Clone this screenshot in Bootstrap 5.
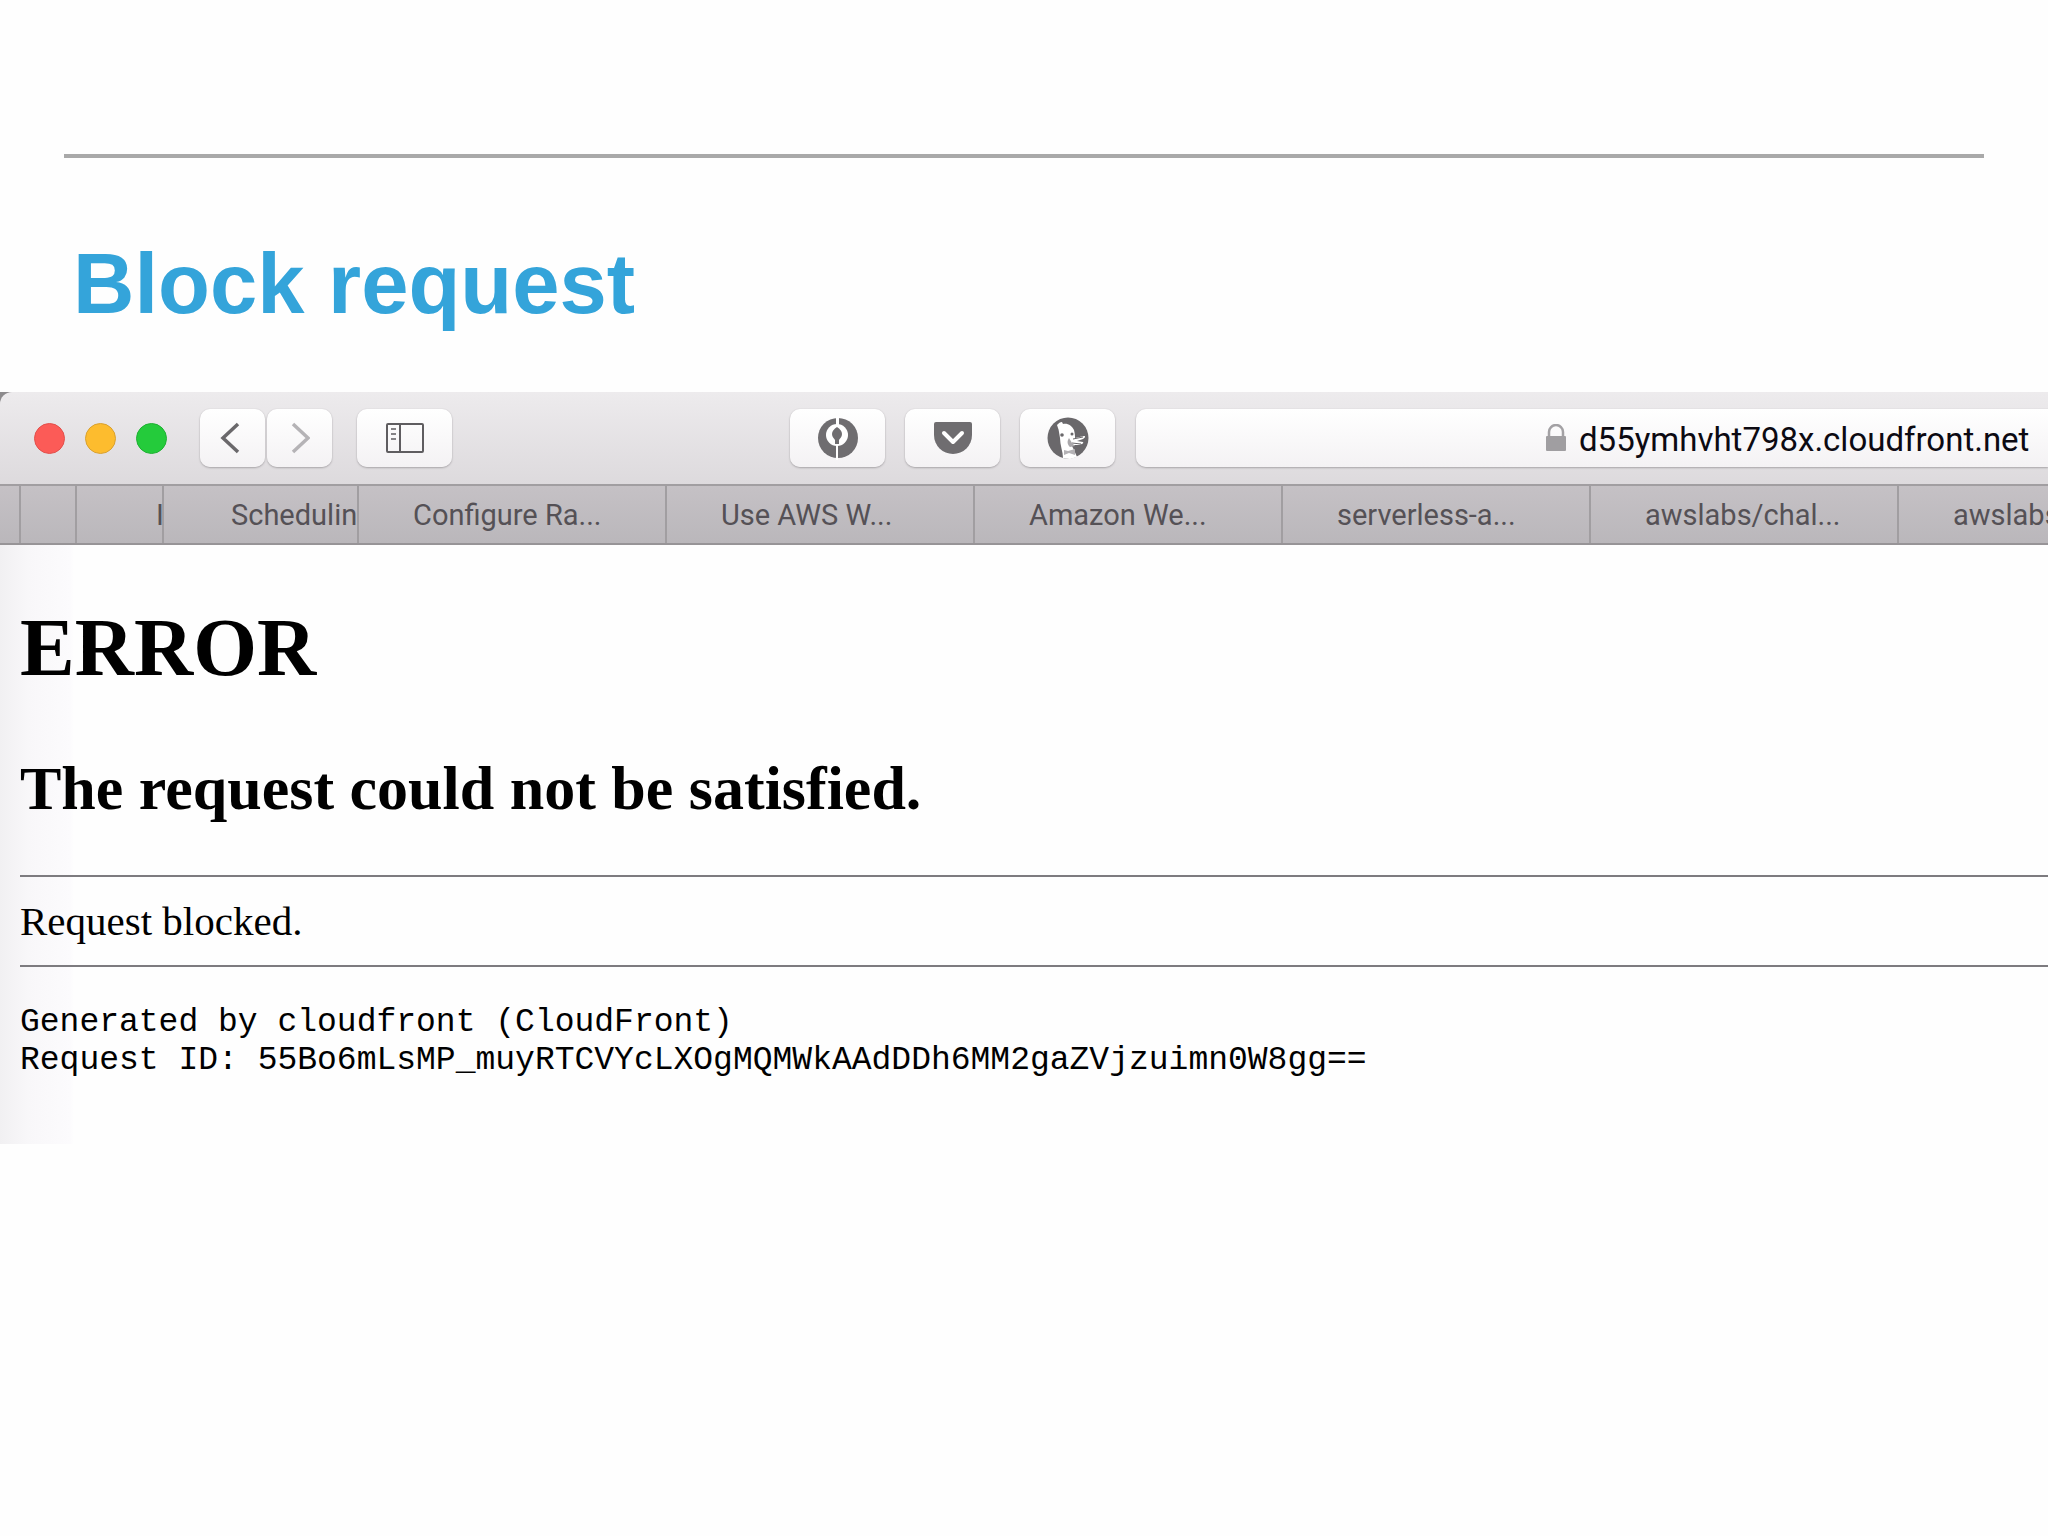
<!DOCTYPE html>
<html lang="en">
<head>
<meta charset="utf-8">
<meta name="viewport" content="width=device-width, initial-scale=1">
<title>Block request</title>
<link href="https://cdn.jsdelivr.net/npm/bootstrap@5.3.0/dist/css/bootstrap.min.css" rel="stylesheet">
<style>
  body { background: #fefefe; color: #000; font-family: "Liberation Sans", Arial, sans-serif; }
  .slide-head { padding: 154px 64px 58px; }
  .slide-rule { height: 4px; background: #a9a9a9; border: 0; opacity: 1; margin: 0 0 76px; }
  .slide-title { font-size: 85px; line-height: 100px; font-weight: 700; color: #34a4da; margin: 0; padding-left: 9px; }

  .browser { font-family: Roboto, Inter, sans-serif; background: linear-gradient(#8d8b8d, #8d8b8d) 0 0 / 12px 12px no-repeat; }
  .toolbar { height: 92px; padding-left: 34px; background: linear-gradient(#edebed, #dddadd); border-top-left-radius: 12px; }
  .lights { gap: 20px; }
  .light { width: 31px; height: 31px; border: 1px solid; border-radius: 50%; padding: 0; }
  .light-close { background: #fc5b57; border-color: #e2504c; }
  .light-min { background: #fdbc2e; border-color: #d9a130; }
  .light-zoom { background: #24cb3b; border-color: #1fb133; }
  .tool { height: 58px; width: 95px; border: 0; border-radius: 10px; padding: 0; background: linear-gradient(#ffffff, #f4f2f4); box-shadow: 0 1px 2px #a8a5a8, 0 0 1px #c8c5c8; }
  .tool-nav { width: 65px; }
  .nav-pair { gap: 2px; margin: 0 25px 0 33px; }
  .extensions { gap: 20px; margin: 0 21px 0 338px; }
  .address { height: 58px; padding-right: 13px; border-radius: 10px 0 0 10px; background: linear-gradient(#ffffff, #f4f2f4); box-shadow: 0 1px 2px #a8a5a8, 0 0 1px #c8c5c8; gap: 12px; }
  .address-input { width: 456px; border: 0; background: transparent; padding: 3px 0 0; font-size: 33px; line-height: 44px; color: #0c0a12; outline-offset: -2px; }

  .tabs { height: 61px; border-top: 2px solid #a19ea1; border-bottom: 2px solid #979497; background: linear-gradient(#c5c1c5, #bab7bb); }
  .tab { flex: 0 0 308px; border-right: 2px solid #a19ea1; padding-left: 54px; overflow: hidden; white-space: nowrap; font-size: 29px; line-height: 58px; color: #555156; text-decoration: none; }
  .tab-edge { flex-basis: 21px; padding: 0; }
  .tab-slim { flex-basis: 56px; padding: 0; }
  .tab-cut { flex-basis: 87px; padding-left: 79px; }
  .tab-half { flex-basis: 195px; padding-left: 67px; }

  .page { font-family: "Liberation Serif", "Times New Roman", serif; padding: 56px 0 64px 20px; background: linear-gradient(90deg, #f1f0f2, #f8f7f9 28px, #fcfbfd 70px, #fefefe 74px); }
  .page h1 { font-size: 82px; line-height: 94px; font-weight: 700; margin: 0 0 57px; }
  .page h2 { font-size: 62px; line-height: 72px; font-weight: 700; margin: 0 0 51px; }
  .page hr { height: 2px; border: 0; background: #7d7b7f; opacity: 1; margin: 0; }
  .page p { font-size: 41px; line-height: 48px; margin: 20px 0; }
  .page pre { font-family: "Liberation Mono", "Courier New", monospace; font-size: 33px; line-height: 38px; margin: 37px 0 0; overflow: hidden; }
</style>
<script src="https://cdn.jsdelivr.net/npm/bootstrap@5.3.0/dist/js/bootstrap.bundle.min.js"></script>
</head>
<body class="overflow-x-hidden">
<header class="slide-head">
  <hr class="slide-rule">
  <h1 class="slide-title">Block request</h1>
</header>

<main class="browser overflow-hidden">
  <div class="toolbar d-flex align-items-center">
    <div class="lights d-flex flex-shrink-0">
      <button class="light light-close" aria-label="Close"></button>
      <button class="light light-min" aria-label="Minimise"></button>
      <button class="light light-zoom" aria-label="Zoom"></button>
    </div>
    <div class="nav-pair d-flex flex-shrink-0">
      <button class="tool tool-nav d-flex align-items-center justify-content-center" aria-label="Back">
        <svg width="26" height="32" viewBox="0 0 26 32" fill="none" stroke="#6a686b" stroke-width="3.500"><path d="M18 2 3 16l15 14"/></svg>
      </button>
      <button class="tool tool-nav d-flex align-items-center justify-content-center" aria-label="Forward">
        <svg width="20" height="32" viewBox="0 0 20 32" fill="none" stroke="#b5b3b6" stroke-width="3.500"><path d="m3 2 15 14L3 30"/></svg>
      </button>
    </div>
    <button class="tool flex-shrink-0 d-flex align-items-center justify-content-center" aria-label="Show sidebar">
      <svg width="40" height="32" viewBox="0 0 40 32" fill="none" stroke="#5f5d60" stroke-width="2"><rect x="2" y="2" width="36" height="28" rx="1"/><path d="M15 2v28"/><path d="M6 7h5M6 12h5M6 17h5" stroke="#858386"/></svg>
    </button>
    <div class="extensions d-flex flex-shrink-0">
      <button class="tool d-flex align-items-center justify-content-center" aria-label="Password manager">
        <svg width="42" height="44" viewBox="0 0 42 44"><circle cx="21" cy="22" r="20" fill="#6f6d70"/><circle cx="20" cy="19" r="11" fill="#fff"/><path d="M19 0h3v12h-3zM19 28h2v16h-2z" fill="#fff"/><path d="M20 11c3 2 5 4 5 7s-2 4-3 6v4h-4v-4c-1-2-3-3-3-6s2-5 5-7z" fill="#6f6d70"/></svg>
      </button>
      <button class="tool d-flex align-items-center justify-content-center" aria-label="Save to Pocket">
        <svg width="40" height="34" viewBox="0 0 40 34"><path d="M3 1h34q2 0 2 2v11a19 19 0 0 1-38 0V3q0-2 2-2z" fill="#6f6d70"/><path d="m11 12 9 9 9-9" fill="none" stroke="#fff" stroke-width="4" stroke-linecap="round" stroke-linejoin="round"/></svg>
      </button>
      <button class="tool d-flex align-items-center justify-content-center" aria-label="DuckDuckGo">
        <svg width="42" height="42" viewBox="0 0 42 42"><circle cx="21" cy="21" r="20.500" fill="#6a686b"/><path d="M10 8c2-2 3-3 5-3l1 2c5-1 9 2 11 6 1 4 1 6 1 8l9-2c2 0 1 2-1 3l-6 2 6 1c1 1-1 3-8 3l-3 1 2 4 3 7-7 2-7-1c0-6-3-13-3-20-1-5-1-8-2-10z" fill="#fff"/><circle cx="15" cy="18" r="1.800" fill="#6a686b"/><circle cx="25" cy="17" r="1.500" fill="#6a686b"/><path d="m26 22 10-2M25 26l9 1" stroke="#6a686b" stroke-width="1" fill="none"/><path d="M22 21c-2 3-2 6 1 9l5-1-3-3z" fill="#aaa8ab"/><path d="m17 33 4 1 7-2v6l-6-2-5 2z" fill="#b4b2b5"/></svg>
      </button>
    </div>
    <div class="address flex-grow-1 d-flex align-items-center justify-content-end">
      <svg class="flex-shrink-0" width="22" height="28" viewBox="0 0 22 28" aria-hidden="true"><path d="M4 13V8a7 7 0 0 1 14 0v5" fill="none" stroke="#a3a1a4" stroke-width="2.500"/><rect x="1" y="12" width="20" height="15" rx="1" fill="#a09ea1"/></svg>
      <input class="address-input" type="text" aria-label="Address" value="d55ymhvht798x.cloudfront.net">
    </div>
  </div>

  <nav class="tabs d-flex overflow-hidden" aria-label="Open tabs">
    <a class="tab tab-edge" href="#" aria-label="Tab 1"></a>
    <a class="tab tab-slim" href="#" aria-label="Tab 2"></a>
    <a class="tab tab-cut" href="#">I</a>
    <a class="tab tab-half" href="#">Schedulin</a>
    <a class="tab" href="#">Configure Ra...</a>
    <a class="tab" href="#">Use AWS W...</a>
    <a class="tab" href="#">Amazon We...</a>
    <a class="tab" href="#">serverless-a...</a>
    <a class="tab" href="#">awslabs/chal...</a>
    <a class="tab" href="#">awslabs</a>
  </nav>

  <article class="page">
    <h1>ERROR</h1>
    <h2>The request could not be satisfied.</h2>
    <hr>
    <p>Request blocked.</p>
    <hr>
    <pre>Generated by cloudfront (CloudFront)
Request ID: 55Bo6mLsMP_muyRTCVYcLXOgMQMWkAAdDDh6MM2gaZVjzuimn0W8gg==</pre>
  </article>
</main>
</body>
</html>
